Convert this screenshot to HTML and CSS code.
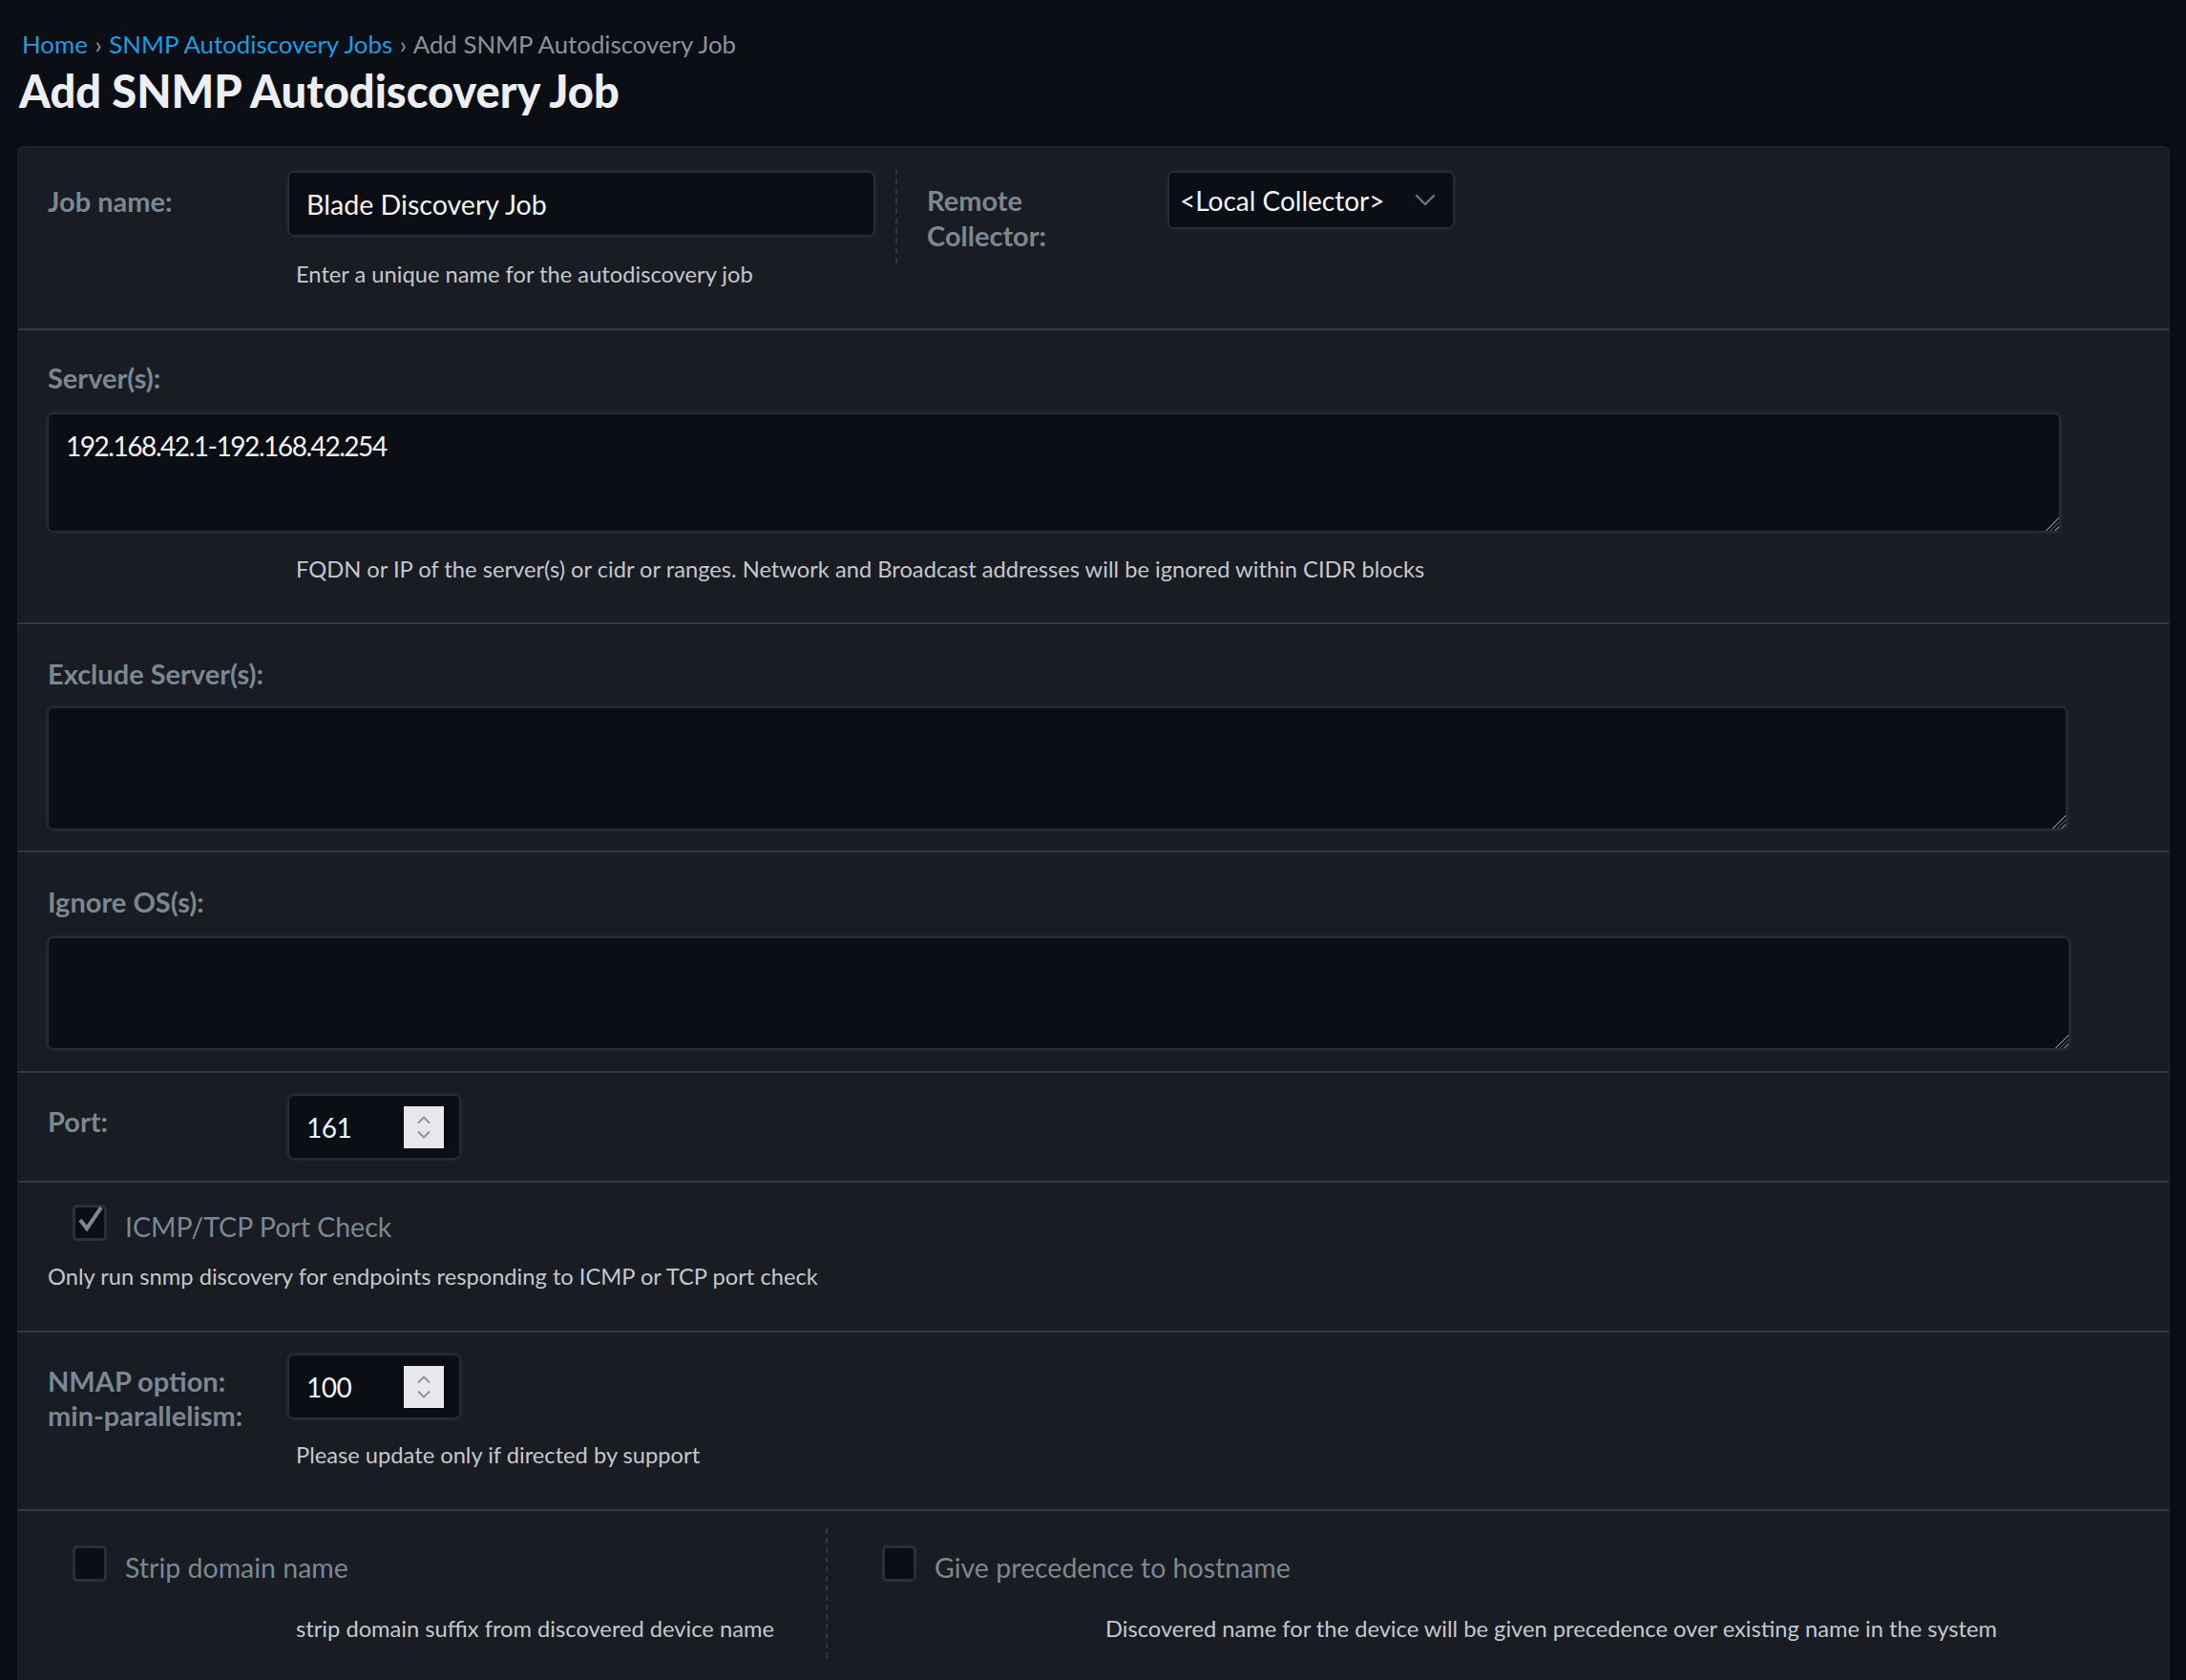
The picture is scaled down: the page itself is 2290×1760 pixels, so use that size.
FILE: index.html
```html
<!DOCTYPE html>
<html lang="en">
<head>
<meta charset="utf-8">
<title>Add SNMP Autodiscovery Job</title>
<link rel="stylesheet" href="styles.css">
</head>
<body>
<div class="page">
  <nav class="crumbs">
    <a class="crumb-link" href="#">Home</a>
    <span class="crumb-sep">›</span>
    <a class="crumb-link" href="#">SNMP Autodiscovery Jobs</a>
    <span class="crumb-sep">›</span>
    <span class="crumb-current">Add SNMP Autodiscovery Job</span>
  </nav>
  <h1 class="title">Add SNMP Autodiscovery Job</h1>

  <form class="panel">
    <div class="row row-job">
      <div class="field field-job">
        <label class="label label-top">Job name:</label>
        <div class="control">
          <input class="input input-job" type="text" value="Blade Discovery Job">
          <div class="help">Enter a unique name for the autodiscovery job</div>
        </div>
      </div>
      <div class="vsep vsep-job"></div>
      <div class="field field-remote">
        <label class="label label-remote">Remote<br>Collector:</label>
        <div class="select">
          <span class="select-text">&lt;Local Collector&gt;</span>
          <svg class="chev" width="22" height="14" viewBox="0 0 22 14"><path d="M2 2 L11 11 L20 2" fill="none" stroke="#6c7580" stroke-width="2.4" stroke-linecap="round" stroke-linejoin="round"/></svg>
        </div>
      </div>
    </div>

    <div class="row row-servers">
      <label class="label">Server(s):</label>
      <textarea class="ta ta-servers">192.168.42.1-192.168.42.254</textarea>
      <div class="help help-indent">FQDN or IP of the server(s) or cidr or ranges. Network and Broadcast addresses will be ignored within CIDR blocks</div>
    </div>

    <div class="row row-exclude">
      <label class="label">Exclude Server(s):</label>
      <textarea class="ta ta-exclude"></textarea>
    </div>

    <div class="row row-ignore">
      <label class="label">Ignore OS(s):</label>
      <textarea class="ta ta-ignore"></textarea>
    </div>

    <div class="row row-port">
      <label class="label label-port">Port:</label>
      <div class="num">
        <span class="num-text">161</span>
        <span class="spin">
          <svg width="18" height="32" viewBox="0 0 18 32"><path d="M3.5 11 L9 5.5 L14.5 11" fill="none" stroke="#8e9199" stroke-width="1.8" stroke-linecap="round" stroke-linejoin="round"/><path d="M3.5 21 L9 26.5 L14.5 21" fill="none" stroke="#8e9199" stroke-width="1.8" stroke-linecap="round" stroke-linejoin="round"/></svg>
        </span>
      </div>
    </div>

    <div class="row row-icmp">
      <div class="check-line">
        <span class="checkbox">
          <svg class="tick" width="34" height="34" viewBox="0 0 34 34"><path d="M6 17 L13 26 L28 4" fill="none" stroke="#7d8892" stroke-width="4" stroke-linecap="butt" stroke-linejoin="miter"/></svg>
        </span>
        <span class="check-label">ICMP/TCP Port Check</span>
      </div>
      <div class="help help-flush">Only run snmp discovery for endpoints responding to ICMP or TCP port check</div>
    </div>

    <div class="row row-nmap">
      <div class="field-inline">
        <label class="label label-nmap">NMAP option:<br>min-parallelism:</label>
        <div class="control">
          <div class="num">
            <span class="num-text">100</span>
            <span class="spin">
              <svg width="18" height="32" viewBox="0 0 18 32"><path d="M3.5 11 L9 5.5 L14.5 11" fill="none" stroke="#8e9199" stroke-width="1.8" stroke-linecap="round" stroke-linejoin="round"/><path d="M3.5 21 L9 26.5 L14.5 21" fill="none" stroke="#8e9199" stroke-width="1.8" stroke-linecap="round" stroke-linejoin="round"/></svg>
            </span>
          </div>
          <div class="help help-nmap">Please update only if directed by support</div>
        </div>
      </div>
    </div>

    <div class="row row-last">
      <div class="half half-left">
        <div class="check-line">
          <span class="checkbox"></span>
          <span class="check-label">Strip domain name</span>
        </div>
        <div class="help help-half">strip domain suffix from discovered device name</div>
      </div>
      <div class="vsep vsep-last"></div>
      <div class="half half-right">
        <div class="check-line">
          <span class="checkbox"></span>
          <span class="check-label">Give precedence to hostname</span>
        </div>
        <div class="help help-half">Discovered name for the device will be given precedence over existing name in the system</div>
      </div>
    </div>
  </form>
</div>
</body>
</html>
```

FILE: styles.css
```css
* { box-sizing: border-box; }

html, body {
  margin: 0;
  background: #0b0e15;
  height: 100%;
  overflow: hidden;
}

body {
  font-family: Lato, "Noto Sans", sans-serif;
  color: #c3c8ce;
}

.page {
  padding: 31px 18px 0 19px;
}

.crumbs {
  font-size: 25.8px;
  line-height: 31px;
  padding-left: 4px;
  color: #8a939b;
}

.crumb-link {
  color: #1c9ce2;
  text-decoration: none;
}

.crumb-sep {
  color: #8a939b;
  margin: 0 1px;
}

.crumb-current {
  color: #8a939b;
}

.title {
  margin: 6px 0 0 1px;
  font-size: 47px;
  line-height: 54px;
  font-weight: 900;
  color: #eceef2;
}

.panel {
  margin-top: 32px;
  background: #191c23;
  border-radius: 6px;
  box-shadow: 0 0 0 1px #23262c, 0 0 6px rgba(0,0,0,0.6);
  min-height: 1700px;
}

.row {
  border-bottom: 2px solid #35383d;
  padding-left: 31px;
}

.label {
  display: block;
  font-size: 29px;
  line-height: 36px;
  font-weight: 700;
  color: #7b8892;
}

.help {
  font-size: 23.7px;
  line-height: 30px;
  color: #c3c8ce;
}

/* Row 1 */
.row-job {
  display: flex;
  align-items: flex-start;
  padding-top: 26px;
  padding-bottom: 42px;
}

.field {
  display: flex;
  align-items: flex-start;
}

.label-top {
  width: 252px;
  padding-top: 13px;
}

.control {
  display: flex;
  flex-direction: column;
}

.input {
  display: block;
  font-family: inherit;
  width: 614px;
  height: 67px;
  background: #0b0e15;
  border: 1px solid #2a2d33;
  border-radius: 6px;
  box-shadow: 0 0 4px rgba(120,125,135,0.35);
  color: #f2f3f5;
  font-size: 28.6px;
  padding: 0 18px;
  outline: none;
}

.input-job + .help {
  margin-top: 25px;
  padding-left: 8px;
}

.vsep {
  border-left: 2px dashed #33363c;
}

.vsep-job {
  height: 99px;
  margin: -3px 31px 0 22px;
}

.label-remote {
  width: 253px;
  padding-top: 11px;
  line-height: 37px;
}

.select {
  width: 299px;
  height: 59px;
  background: #0b0e15;
  border: 1px solid #2a2d33;
  border-radius: 6px;
  box-shadow: 0 0 4px rgba(120,125,135,0.35);
  display: flex;
  align-items: center;
  justify-content: space-between;
  padding: 0 18px 0 11px;
}

.select-text {
  font-size: 28px;
  color: #f2f3f5;
}

/* Textareas */
.ta {
  display: block;
  font-family: inherit;
  background: #0b0e15;
  border: 1px solid #2a2d33;
  border-radius: 6px;
  box-shadow: 0 0 4px rgba(120,125,135,0.35);
  color: #f2f3f5;
  font-size: 28px;
  letter-spacing: -1.45px;
  line-height: 34px;
  padding: 16px 18px;
  outline: none;
  color-scheme: dark;
  resize: both;
}

.ta::-webkit-resizer {
  background: linear-gradient(135deg,
    transparent 0 52%,
    #6a6c70 52% 58%, transparent 58% 67%,
    #6a6c70 67% 73%, transparent 73% 82%,
    #6a6c70 82% 88%, transparent 88% 100%);
}

.row-servers {
  padding-top: 32px;
  padding-bottom: 41px;
}

.ta-servers {
  margin-top: 19px;
  width: 2108px;
  height: 124px;
}

.help-indent {
  margin-top: 24px;
  padding-left: 260px;
}

.row-exclude {
  padding-top: 34px;
  padding-bottom: 22px;
}

.ta-exclude {
  margin-top: 17px;
  width: 2115px;
  height: 128px;
}

.row-ignore {
  padding-top: 34px;
  padding-bottom: 23px;
}

.ta-ignore {
  margin-top: 19px;
  width: 2118px;
  height: 117px;
}

/* Port */
.row-port {
  display: flex;
  align-items: flex-start;
  padding-top: 23px;
  padding-bottom: 23px;
}

.label-port {
  width: 252px;
  padding-top: 10px;
}

.num {
  width: 180px;
  height: 67px;
  background: #0b0e15;
  border: 1px solid #2a2d33;
  border-radius: 6px;
  box-shadow: 0 0 4px rgba(120,125,135,0.35);
  display: flex;
  align-items: center;
  justify-content: space-between;
  padding: 0 16px 0 18px;
}

.num-text {
  font-size: 28px;
  letter-spacing: -0.5px;
  color: #f2f3f5;
}

.spin {
  width: 42px;
  height: 44px;
  background: #e7e7ec;
  display: flex;
  align-items: center;
  justify-content: center;
}

/* Checkbox rows */
.row-icmp {
  padding-top: 20px;
  padding-bottom: 42px;
}

.check-line {
  display: flex;
  align-items: center;
  padding-left: 26px;
}

.checkbox {
  position: relative;
  width: 36px;
  height: 38px;
  background: #0b0e15;
  border: 3px solid #2c2f35;
  border-radius: 5px;
  flex: none;
}

.tick {
  position: absolute;
  left: -1px;
  top: -4px;
}

.check-label {
  margin-left: 19px;
  padding-top: 8px;
  font-size: 28.5px;
  line-height: 36px;
  color: #7b8892;
}

.help-flush {
  margin-top: 19px;
}

/* NMAP */
.row-nmap {
  padding-top: 23px;
  padding-bottom: 42px;
}

.field-inline {
  display: flex;
  align-items: flex-start;
}

.label-nmap {
  width: 252px;
  padding-top: 10px;
}

.help-nmap {
  margin-top: 23px;
  padding-left: 8px;
}

/* Last row */
.row-last {
  display: flex;
  align-items: flex-start;
  padding-left: 0;
  border-bottom: none;
  padding-top: 18px;
}

.half {
  padding-left: 31px;
  padding-top: 15px;
}

.half-left {
  width: 846px;
}

.half-right {
  flex: 1;
}

.help-half {
  margin-top: 31px;
  padding-left: 260px;
}

.vsep-last {
  height: 136px;
}
```
